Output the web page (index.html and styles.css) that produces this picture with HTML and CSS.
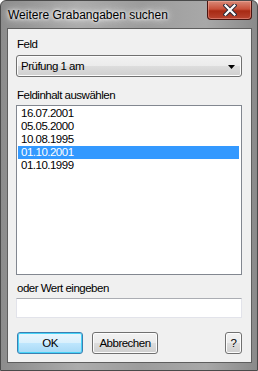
FILE: index.html
```html
<!DOCTYPE html>
<html>
<head>
<meta charset="utf-8">
<link rel="stylesheet" href="styles.css">
</head>
<body>
<div class="window">
  <div class="titlebar">
    <span class="title">Weitere Grabangaben suchen</span>
    <div class="close">
      <svg width="14" height="12" viewBox="0 0 14 12">
        <path d="M2.5 1.5 L11.5 10.5 M11.5 1.5 L2.5 10.5" stroke="#2b2b3a" stroke-width="4.2" stroke-linecap="square" fill="none"/>
        <path d="M2.5 1.5 L11.5 10.5 M11.5 1.5 L2.5 10.5" stroke="#ffffff" stroke-width="2.2" stroke-linecap="square" fill="none"/>
      </svg>
    </div>
  </div>
  <div class="client">
    <div class="label first">Feld</div>
    <div class="select">
      <span>Prüfung 1 am</span>
      <svg class="arrow" width="7" height="4" viewBox="0 0 7 4"><path d="M0 0 H7 L3.5 4 Z" fill="#000"/></svg>
    </div>
    <div class="label second">Feldinhalt auswählen</div>
    <div class="list">
      <div class="item">16.07.2001</div>
      <div class="item">05.05.2000</div>
      <div class="item">10.08.1995</div>
      <div class="item selected">01.10.2001</div>
      <div class="item">01.10.1999</div>
    </div>
    <div class="label third">oder Wert eingeben</div>
    <div class="input"></div>
    <div class="buttons">
      <div class="btn ok">OK</div>
      <div class="btn cancel">Abbrechen</div>
      <div class="spacer"></div>
      <div class="btn help">?</div>
    </div>
  </div>
</div>
</body>
</html>
```
FILE: styles.css
```css
html, body {
  margin: 0;
  padding: 0;
  background: #ffffff;
}
body {
  width: 258px;
  height: 371px;
  overflow: hidden;
  font-family: "Liberation Sans", Arial, sans-serif;
}
.window {
  box-sizing: border-box;
  width: 258px;
  height: 371px;
  border: 1px solid #4a4a4a;
  border-radius: 6px 6px 0 0;
  background: linear-gradient(90deg, #8c8c8c 0%, #acacac 30%, #9c9c9c 55%, #a8a8a8 80%, #8a8a8a 100%);
  display: flex;
  flex-direction: column;
}
.titlebar {
  height: 27px;
  display: flex;
  align-items: flex-start;
  justify-content: space-between;
}
.title {
  margin: 7px 0 0 7px;
  font-size: 12px;
  line-height: 14px;
  color: #000;
  text-shadow: 0 0 6px #ffffff, 0 0 10px #e8e8e8, 0 0 3px #ffffff;
}
.close {
  box-sizing: border-box;
  width: 45px;
  height: 19px;
  margin-right: 5px;
  border: 1px solid #4a1410;
  border-top: none;
  border-radius: 0 0 4px 4px;
  background: linear-gradient(180deg, #d98a78 0%, #c8503a 45%, #a82a14 55%, #b84430 100%);
  box-shadow: inset 0 0 0 1px rgba(255,190,180,0.4);
  display: flex;
  align-items: center;
  justify-content: center;
}
.client {
  flex: 1;
  margin: 0 5px 7px 6px;
  border: 1px solid #5e5e5e;
  background: #f0f0f0;
  padding: 0 9px 0 8px;
  display: flex;
  flex-direction: column;
  font-size: 11.5px;
  letter-spacing: -0.5px;
  color: #000;
}
.label {
  line-height: 13px;
  height: 13px;
  padding-left: 1px;
}
.label.first { margin-top: 9px; }
.label.second { margin-top: 12px; }
.label.third { margin-top: 7px; }
.select {
  box-sizing: border-box;
  margin-top: 4px;
  height: 22px;
  border: 1px solid #707070;
  border-radius: 3px;
  background: linear-gradient(180deg, #f2f2f2 0%, #ebebeb 50%, #dddddd 51%, #cfcfcf 100%);
  box-shadow: inset 0 0 0 1px #fcfcfc;
  display: flex;
  align-items: center;
  justify-content: space-between;
  padding: 0 6px 0 4px;
  line-height: 13px;
}
.arrow { margin-top: 1px; }
.list {
  box-sizing: border-box;
  margin-top: 3px;
  height: 170px;
  border: 1px solid #828790;
  background: #ffffff;
  padding: 1px 2px 0 1px;
}
.item {
  height: 13px;
  line-height: 13px;
  padding-left: 3px;
}
.item.selected {
  background: #3399ff;
  color: #ffffff;
}
.input {
  box-sizing: border-box;
  margin-top: 3px;
  height: 20px;
  border: 1px solid #e2e3ea;
  border-top-color: #abadb3;
  background: #ffffff;
}
.buttons {
  margin-top: 14px;
  display: flex;
  height: 22px;
  padding-left: 1px;
}
.spacer { flex: 1; }
.btn {
  box-sizing: border-box;
  height: 22px;
  border: 1px solid #707070;
  border-radius: 3px;
  background: linear-gradient(180deg, #f2f2f2 0%, #ebebeb 50%, #dddddd 51%, #cfcfcf 100%);
  box-shadow: inset 0 0 0 1px #fcfcfc;
  display: flex;
  align-items: center;
  justify-content: center;
  line-height: 13px;
}
.btn.ok {
  width: 66px;
  border-color: #3c7fb1;
  background: linear-gradient(180deg, #eaf6fd 0%, #d9f0fc 50%, #bee6fd 51%, #a7d9f5 100%);
  box-shadow: inset 0 0 0 1px #48d4f8;
}
.btn.cancel {
  width: 66px;
  margin-left: 9px;
}
.btn.help {
  width: 17px;
}
```
